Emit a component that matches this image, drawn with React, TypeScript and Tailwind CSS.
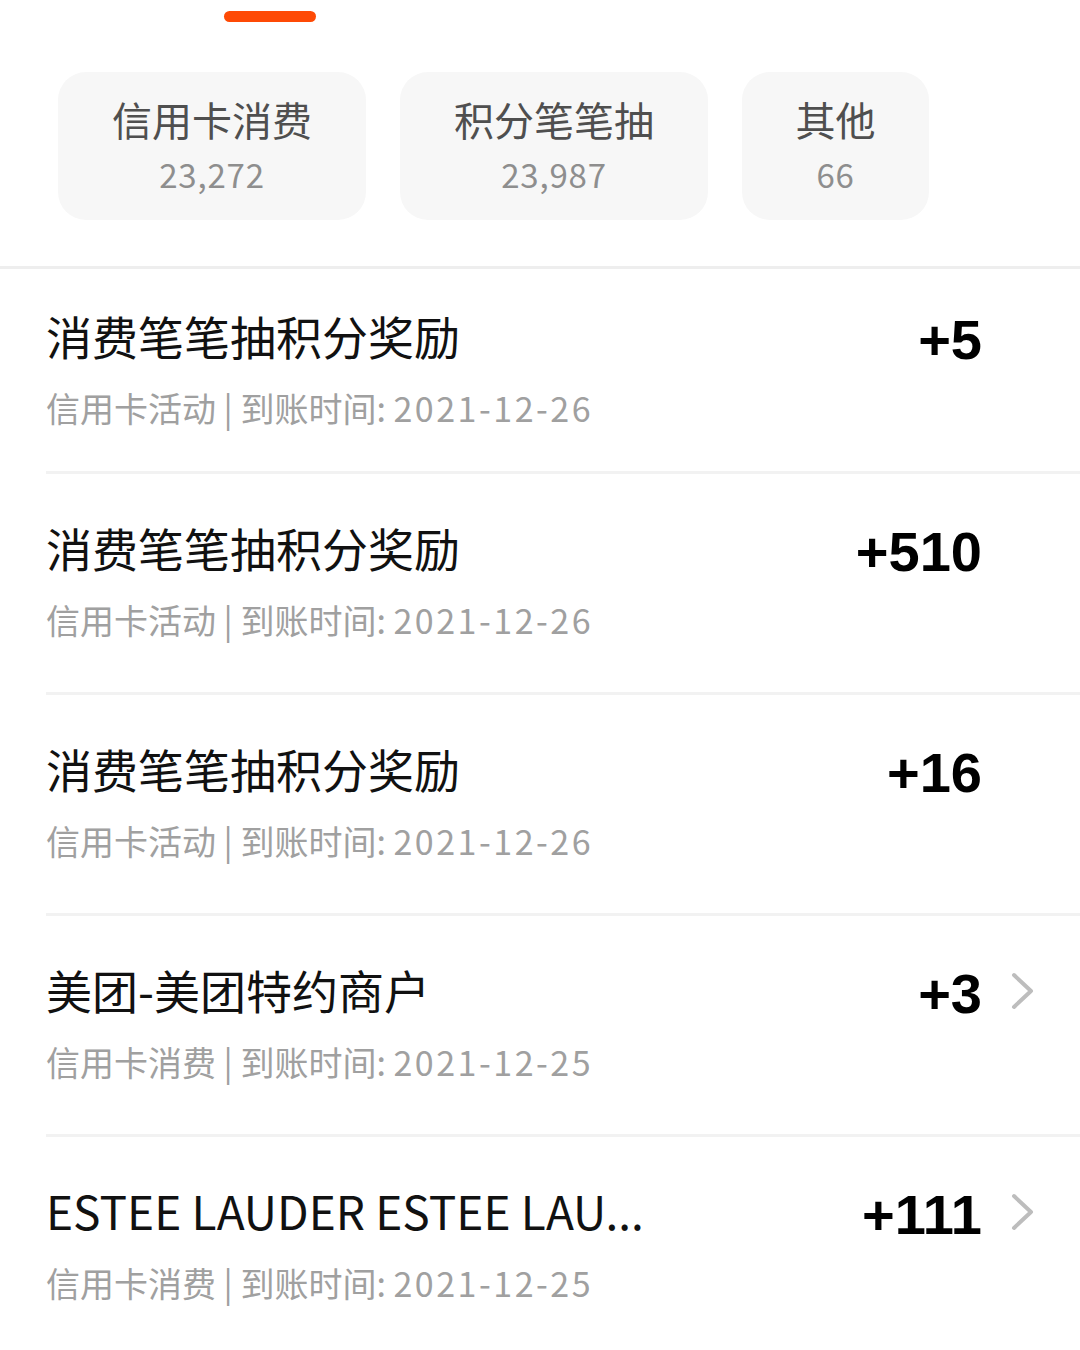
type Entry = {
  title: string;
  kind: string;
  date: string;
  amount: string;
  link?: boolean;
};

const categories = [
  { label: '信用卡消费', value: '23,272', width: 'w-[308px]' },
  { label: '积分笔笔抽', value: '23,987', width: 'w-[308px]' },
  { label: '其他', value: '66', width: 'w-[187px]' },
];

const entries: Entry[] = [
  { title: '消费笔笔抽积分奖励', kind: '信用卡活动', date: '2021-12-26', amount: '+5' },
  { title: '消费笔笔抽积分奖励', kind: '信用卡活动', date: '2021-12-26', amount: '+510' },
  { title: '消费笔笔抽积分奖励', kind: '信用卡活动', date: '2021-12-26', amount: '+16' },
  { title: '美团-美团特约商户', kind: '信用卡消费', date: '2021-12-25', amount: '+3', link: true },
  // the app cuts the merchant name itself
  { title: 'ESTEE LAUDER ESTEE LAU...', kind: '信用卡消费', date: '2021-12-25', amount: '+111', link: true },
];

const font = { fontFamily: '"Noto Sans CJK SC", "Noto Sans", sans-serif' };

function Chevron() {
  return (
    <svg width="26" height="38" viewBox="0 0 26 38" fill="none">
      <path d="M4 3 L21 19 L4 35" stroke="#bdbdbd" strokeWidth="4" strokeLinecap="round" strokeLinejoin="round" />
    </svg>
  );
}

export default function App() {
  return (
    <main className="min-h-[1350px] w-[1080px] bg-white overflow-hidden" style={font}>
      {/* Tabs + category cards */}
      <section className="flex flex-col">
        <div className="ml-[224px] mt-[11px] h-[11px] w-[92px] rounded-full bg-[#fe4a05]" />
        <div className="mt-[50px] flex gap-[34px] pl-[58px]">
          {categories.map((c) => (
            <div
              key={c.label}
              className={`${c.width} h-[148px] pb-[6px] rounded-[28px] bg-[#f7f7f7] flex flex-col items-center justify-center`}
            >
              <span className="text-[40px] leading-[52px] text-[#4f4f4f]">{c.label}</span>
              <span className="text-[33px] leading-[40px] tracking-[0.8px] text-[#8e8e8e] mt-[9px]">{c.value}</span>
            </div>
          ))}
        </div>
        <div className="mt-[46px] h-[3px] bg-[#eeeeee]" />
      </section>

      {/* Points list */}
      <section className="flex flex-col">
        {entries.map((e, i) => (
          <div key={i} className="pl-[46px]">
            <div
              className={`border-b-[3px] border-[#f2f2f2] ${
                i === 0 ? 'pt-[36px] pb-[41px]' : 'pt-[43px] pb-[50px]'
              }`}
            >
              <div className="flex items-center h-[60px]">
                <span className="flex-1 whitespace-nowrap text-[46px] leading-[60px] text-[#111111]">
                  {e.title}
                </span>
                <span
                  className="pt-[10px] text-[56px] leading-[60px] font-bold text-black"
                  style={{ fontFamily: '"Liberation Sans", Arial, sans-serif' }}
                >
                  {e.amount}
                </span>
                <span className="w-[98px] pt-[4px] flex items-center justify-start pl-[28px]">
                  {e.link && <Chevron />}
                </span>
              </div>
              <div className="mt-[21px] text-[34px] leading-[44px] text-[#a0a0a0] whitespace-nowrap">
                {e.kind} | 到账时间: <span className="tracking-[2.5px]">{e.date}</span>
              </div>
            </div>
          </div>
        ))}
      </section>
    </main>
  );
}
